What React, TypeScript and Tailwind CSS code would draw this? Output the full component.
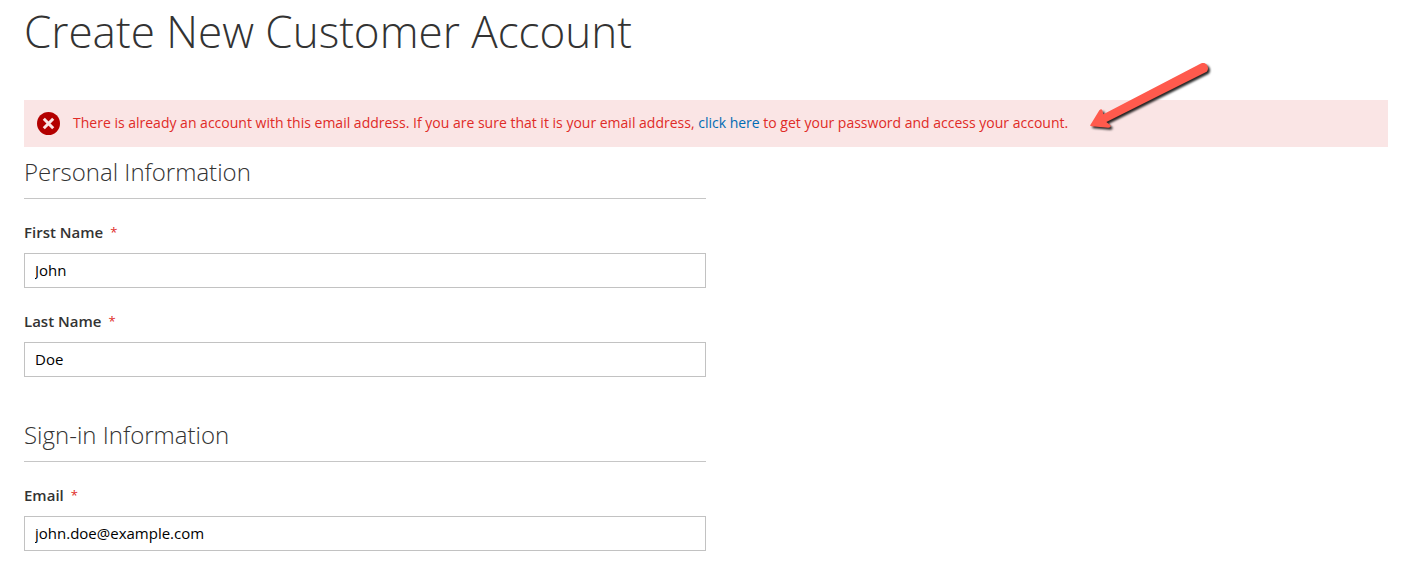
import { useState } from "react";

type FieldProps = { id: string; label: string; type?: string; initial: string };

function Field({ id, label, type = "text", initial }: FieldProps) {
  const [value, setValue] = useState(initial);
  return (
    <div className="flex flex-col gap-3">
      <label htmlFor={id} className="flex gap-[7px] text-[15px] leading-[18px] font-semibold text-[#333333]">
        {label}
        <span className="text-[13px] leading-[18px] font-normal text-[#e02b27]">*</span>
      </label>
      <input
        id={id}
        type={type}
        required
        value={value}
        onChange={(e) => setValue(e.target.value)}
        className="h-[35px] w-full border border-[#c2c2c2] bg-white px-2.5 pb-0.5 text-[15px] text-black outline-none"
      />
    </div>
  );
}

function Heading({ children }: { children: string }) {
  return (
    <h2 className="border-b border-[#c6c6c6] pb-2.5 text-2xl font-light text-[#333333]">{children}</h2>
  );
}

function Arrow() {
  return (
    <svg
      viewBox="141 30 390 225"
      className="pointer-events-none absolute -top-10 right-[171px] h-[75px] w-[130px] drop-shadow-[2px_2px_1px_rgba(0,0,0,0.85)]"
      aria-hidden="true"
    >
      <path
        d="M151 225L178 181Q184 174 187 181L190 193L484 40C500 34 510 54 500 65L199 216L211 226Q214 233 205 233L155 229Q149 228 151 225Z"
        fill="#ff5a4d"
      />
    </svg>
  );
}

export default function App() {
  return (
    <main className="pt-[3px] pr-[13px] pb-6 pl-6 font-['Open_Sans',sans-serif]">
      <h1 className="text-[44px] leading-14 font-light text-[#333333]">Create New Customer Account</h1>
      <div role="alert" className="relative mt-[41px] flex items-center gap-[13px] bg-[#fae5e5] px-[13px] py-3 text-sm text-[#e02b27]">
        <svg viewBox="0 0 23 23" className="size-[23px] shrink-0" aria-hidden="true">
          <circle cx="11.5" cy="11.5" r="11.5" fill="#b30000" />
          <path d="M6.8 6.8l9.4 9.4m0-9.4l-9.4 9.4" stroke="#fae5e5" strokeWidth="3" />
        </svg>
        <p className="pb-px">
          There is already an account with this email address. If you are sure that it is your email address,{" "}
          <a href="#reset" className="text-[#006bb4]">click here</a> to get your password and access your account.
        </p>
        <Arrow />
      </div>
      <form className="mt-[9px] flex w-1/2 flex-col gap-[42px]">
        <section className="flex flex-col gap-6">
          <Heading>Personal Information</Heading>
          <Field id="first" label="First Name" initial="John" />
          <Field id="last" label="Last Name" initial="Doe" />
        </section>
        <section className="flex flex-col gap-6">
          <Heading>Sign-in Information</Heading>
          <Field id="email" label="Email" type="email" initial="john.doe@example.com" />
        </section>
      </form>
    </main>
  );
}
